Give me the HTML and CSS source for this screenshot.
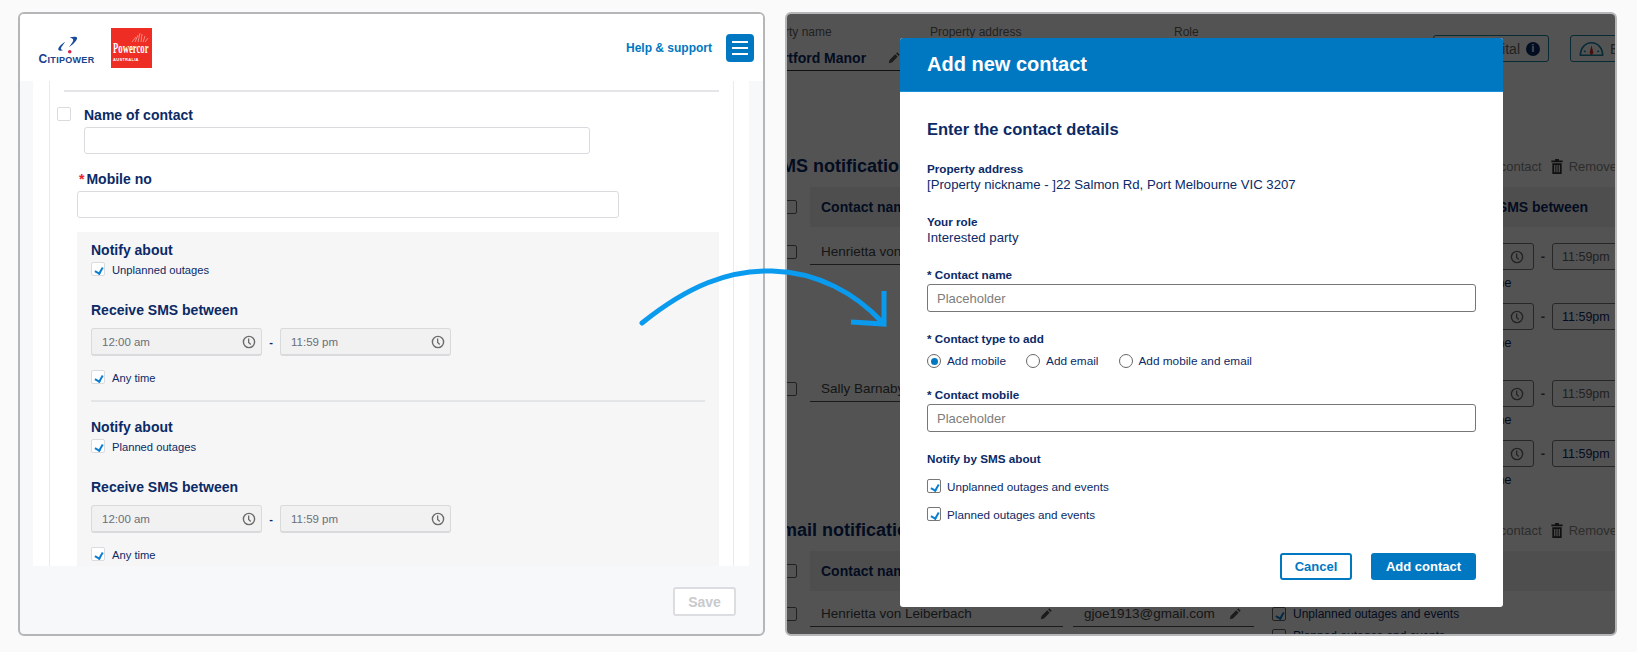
FILE: index.html
```html
<!DOCTYPE html>
<html lang="en">
<head>
    <meta charset="UTF-8">
    <meta name="viewport" content="width=device-width, initial-scale=1.0">
    <title>Add new contact</title>
    <link rel="stylesheet" href="styles.css">
</head>
<body>
    <!-- Iconos reutilizados -->
    <svg class="sprite" aria-hidden="true">
        <symbol id="clock" viewBox="0 0 16 16">
            <circle cx="8" cy="8" r="6.4" fill="none" stroke="currentColor" stroke-width="1.6"/>
            <path d="M7.6 4v4.6l2.4 2.2" fill="none" stroke="currentColor" stroke-width="1.5"/>
        </symbol>
        <symbol id="pencil" viewBox="0 0 16 16">
            <path d="M11.4 1.6l3 3-1.5 1.5-3-3zM8.900 4.100l3 3-7 7-3.900 .9 .9-3.900z" fill="currentColor"/>
        </symbol>
        <symbol id="trash" viewBox="0 0 12 16">
            <path d="M4 0h4v1.500h4v2H0v-2h4zM1 4.500h10V16H1zM3 6.500V14h1.200V6.500zM5.400 6.500V14h1.200V6.500zM7.800 6.500V14H9V6.500z" fill="currentColor" fill-rule="evenodd"/>
        </symbol>
    </svg>

    <main class="board">
        <!-- Pantalla movil: formulario -->
        <section class="frame frame-form">
            <header class="site-header">
                <div class="logos">
                    <div class="logo-citi">
                        <svg class="logo-citi-mark" viewBox="0 0 20 16">
                            <path d="M8 5C4 7.500 1 10.500 2 12.500 3 13.500 5 13 6 12.500 4.500 12.500 3.500 11.500 4.500 10 5.500 8.500 7 6.500 8 5z" fill="#1a4a9c"/>
                            <path d="M12 1c3-.5 6-.8 6.500.5.500 2-3.500 6-7.500 8.500 2.500-3 4.500-5.500 4-7-.5-1-2-1.500-3-2z" fill="#1a4a9c"/>
                            <circle cx="12" cy="14" r="1.600" fill="#d9264a"/>
                        </svg>
                        <span class="logo-citi-name"><span class="logo-citi-cap">C</span>ITIPOWER</span>
                    </div>
                    <div class="logo-powercor">
                        <svg class="logo-powercor-rays" viewBox="0 0 18 9">
                            <path d="M1 9l4-5M4 9l3-7M7 9l2-9M10 9l1-8M12 9l2-6M14 9l3-4" stroke="#f7b7ae" stroke-width=".7"/>
                        </svg>
                        <span class="logo-powercor-name">Powercor</span>
                        <span class="logo-powercor-sub">AUSTRALIA</span>
                    </div>
                </div>
                <div class="header-right">
                    <a class="help-link">Help &amp; support</a>
                    <button class="menu-button" aria-label="Menu"><span></span><span></span><span></span></button>
                </div>
            </header>

            <div class="form-scroll">
                <div class="form-card">
                    <div class="contact-box">
                        <hr class="rule">
                        <div class="name-row">
                            <span class="checkbox checkbox-light"></span>
                            <div>
                                <label class="form-label">Name of contact</label>
                                <input class="text-input input-name" type="text">
                            </div>
                        </div>
                        <div class="mobile-row">
                            <label class="form-label label-required"><span class="star">*</span>Mobile no</label>
                            <input class="text-input input-mobile" type="text">
                        </div>

                        <div class="notify-panel">
                            <h4 class="form-label">Notify about</h4>
                            <div class="check-row"><span class="checkbox checkbox-light is-checked"></span>Unplanned outages</div>
                            <h4 class="form-label receive-title">Receive SMS between</h4>
                            <div class="time-row">
                                <div class="time-input">12:00 am<svg class="clock"><use href="#clock"/></svg></div>
                                <span class="time-dash">-</span>
                                <div class="time-input">11:59 pm<svg class="clock"><use href="#clock"/></svg></div>
                            </div>
                            <div class="check-row any-time"><span class="checkbox checkbox-light is-checked"></span>Any time</div>
                            <hr class="rule rule-panel">
                            <h4 class="form-label">Notify about</h4>
                            <div class="check-row"><span class="checkbox checkbox-light is-checked"></span>Planned outages</div>
                            <h4 class="form-label receive-title">Receive SMS between</h4>
                            <div class="time-row">
                                <div class="time-input">12:00 am<svg class="clock"><use href="#clock"/></svg></div>
                                <span class="time-dash">-</span>
                                <div class="time-input">11:59 pm<svg class="clock"><use href="#clock"/></svg></div>
                            </div>
                            <div class="check-row any-time"><span class="checkbox checkbox-light is-checked"></span>Any time</div>
                        </div>
                    </div>
                </div>
            </div>

            <footer class="form-footer">
                <button class="save-button" disabled>Save</button>
            </footer>
        </section>

        <!-- Escritorio: dialogo sobre la pagina -->
        <section class="frame frame-desktop">
            <div class="page">
                <div class="page-top">
                    <div class="top-field top-field-name">
                        <span class="top-label">Property name</span>
                        <span class="top-value">Hartford Manor<svg class="pencil"><use href="#pencil"/></svg></span>
                    </div>
                    <div class="top-field"><span class="top-label">Property address</span></div>
                    <div class="top-field"><span class="top-label">Role</span></div>
                    <div class="top-actions">
                        <span class="top-button top-button-wide">Go digital<span class="info-dot">i</span></span>
                        <span class="top-button">
                            <svg class="gauge" viewBox="0 0 26 16">
                                <path d="M1.500 14.500C1.500 7 6.500 1.500 13 1.500S24.500 7 24.500 14.500z" fill="none" stroke="#17809f" stroke-width="1.800"/>
                                <path d="M13 4l2 8-2 3-2-3z" fill="#d8301f"/>
                                <path d="M5 10l2 1M21 10l-2 1" stroke="#17809f" stroke-width="1.400"/>
                            </svg>
                            Energy
                        </span>
                    </div>
                </div>

                <div class="section-head">
                    <h3 class="section-title">SMS notifications</h3>
                    <div class="section-actions">
                        <span>Add contact</span>
                        <svg class="trash"><use href="#trash"/></svg>
                        <span>Remove selected</span>
                    </div>
                </div>
                <div class="table-head">
                    <span class="checkbox checkbox-page"></span>
                    <span class="table-band">
                        <span class="head-name">Contact name</span>
                        <span class="head-sms">Receive SMS between</span>
                    </span>
                </div>
                <div class="contact-row">
                    <span class="checkbox checkbox-page"></span>
                    <span class="name-field">Henrietta von Leiberbach</span>
                    <div class="times">
                        <div class="time-line">
                            <div class="page-time is-disabled"><svg class="clock"><use href="#clock"/></svg></div>
                            <span class="page-dash">-</span>
                            <div class="page-time is-disabled">11:59pm</div>
                        </div>
                        <div class="any-line">Any time</div>
                        <div class="time-line">
                            <div class="page-time"><svg class="clock"><use href="#clock"/></svg></div>
                            <span class="page-dash">-</span>
                            <div class="page-time">11:59pm</div>
                        </div>
                        <div class="any-line">Any time</div>
                    </div>
                </div>
                <div class="contact-row contact-row-next">
                    <span class="checkbox checkbox-page"></span>
                    <span class="name-field">Sally Barnaby</span>
                    <div class="times">
                        <div class="time-line">
                            <div class="page-time is-disabled"><svg class="clock"><use href="#clock"/></svg></div>
                            <span class="page-dash">-</span>
                            <div class="page-time is-disabled">11:59pm</div>
                        </div>
                        <div class="any-line">Any time</div>
                        <div class="time-line">
                            <div class="page-time"><svg class="clock"><use href="#clock"/></svg></div>
                            <span class="page-dash">-</span>
                            <div class="page-time">11:59pm</div>
                        </div>
                        <div class="any-line">Any time</div>
                    </div>
                </div>

                <div class="section-head section-head-email">
                    <h3 class="section-title">Email notifications</h3>
                    <div class="section-actions">
                        <span>Add contact</span>
                        <svg class="trash"><use href="#trash"/></svg>
                        <span>Remove selected</span>
                    </div>
                </div>
                <div class="table-head">
                    <span class="checkbox checkbox-page"></span>
                    <span class="table-band"><span class="head-name">Contact name</span></span>
                </div>
                <div class="email-row">
                    <span class="checkbox checkbox-page"></span>
                    <span class="name-field">Henrietta von Leiberbach<svg class="pencil"><use href="#pencil"/></svg></span>
                    <span class="name-field email-field">gjoe1913@gmail.com<svg class="pencil"><use href="#pencil"/></svg></span>
                    <div class="email-checks">
                        <div class="email-check"><span class="checkbox checkbox-page is-checked"></span>Unplanned outages and events</div>
                        <div class="email-check"><span class="checkbox checkbox-page"></span>Planned outages and events</div>
                    </div>
                </div>
            </div>

            <div class="scrim"></div>

            <div class="modal">
                <div class="modal-header">Add new contact</div>
                <div class="modal-body">
                    <h2 class="modal-title">Enter the contact details</h2>

                    <div class="info-block info-address">
                        <div class="modal-label">Property address</div>
                        <div class="modal-text">[Property nickname - ]22 Salmon Rd, Port Melbourne VIC 3207</div>
                    </div>
                    <div class="info-block info-role">
                        <div class="modal-label">Your role</div>
                        <div class="modal-text">Interested party</div>
                    </div>

                    <div class="modal-field field-name">
                        <label class="modal-label">* Contact name</label>
                        <input class="modal-input" type="text" placeholder="Placeholder">
                    </div>

                    <div class="modal-field">
                        <div class="modal-label">* Contact type to add</div>
                        <div class="radio-group">
                            <span class="radio-item"><span class="radio is-selected"></span>Add mobile</span>
                            <span class="radio-item"><span class="radio"></span>Add email</span>
                            <span class="radio-item"><span class="radio"></span>Add mobile and email</span>
                        </div>
                    </div>

                    <div class="modal-field">
                        <label class="modal-label">* Contact mobile</label>
                        <input class="modal-input" type="text" placeholder="Placeholder">
                    </div>

                    <div class="modal-field">
                        <div class="modal-label">Notify by SMS about</div>
                        <div class="modal-check modal-check-first"><span class="checkbox checkbox-modal is-checked"></span>Unplanned outages and events</div>
                        <div class="modal-check"><span class="checkbox checkbox-modal is-checked"></span>Planned outages and events</div>
                    </div>

                    <div class="modal-actions">
                        <button class="btn btn-cancel">Cancel</button>
                        <button class="btn btn-add">Add contact</button>
                    </div>
                </div>
            </div>
        </section>

        <!-- Flecha entre las dos pantallas -->
        <svg class="arrow" viewBox="0 0 1637 652">
            <path d="M642 323C688 286 728 270 772 271C818 272 856 294 882 322" fill="none" stroke="#0a9bef" stroke-width="5" stroke-linecap="round"/>
            <path d="M884 291V324L851 322" fill="none" stroke="#0a9bef" stroke-width="5"/>
        </svg>
    </main>
</body>
</html>
```

FILE: styles.css
```css
* {
  box-sizing: border-box;
}
body {
  margin: 0;
  background-color: #fafafa;
  font-family: "Liberation Sans", Arial, sans-serif;
  color: #0b2a66;
}
.sprite {
  display: none;
}
.board {
  position: relative;
  display: flex;
  gap: 20px;
  width: 1637px;
  height: 652px;
  padding: 12px 20px 0 18px;
}
.arrow {
  position: absolute;
  left: 0;
  top: 0;
  width: 1637px;
  height: 652px;
  pointer-events: none;
}
.frame {
  height: 624px;
  border: 2px solid #b4b6b8;
  border-radius: 6px;
  overflow: hidden;
}
.frame-form {
  width: 747px;
  background-color: #f7f8fa;
}
.frame-desktop {
  position: relative;
  width: 832px;
  background-color: #fff;
}

/* Cabecera del sitio */
.site-header {
  display: flex;
  justify-content: space-between;
  align-items: center;
  height: 67px;
  padding: 0 9px 0 19px;
  background-color: #fff;
}
.logos {
  display: flex;
  align-items: center;
  gap: 17px;
}
.logo-citi {
  display: flex;
  flex-direction: column;
  align-items: center;
  width: 55px;
  margin-top: 6px;
}
.logo-citi-mark {
  width: 23px;
  height: 18px;
  margin-left: 2px;
}
.logo-citi-name {
  font-size: 9px;
  font-weight: bold;
  line-height: 11px;
  letter-spacing: 0.3px;
  color: #17428c;
  white-space: nowrap;
}
.logo-citi-cap {
  font-size: 12px;
}
.logo-powercor {
  display: flex;
  flex-direction: column;
  width: 41px;
  height: 40px;
  padding: 5px 2px 0;
  background-color: #ee2d24;
  color: #fff;
}
.logo-powercor-rays {
  flex: none;
  width: 18px;
  height: 9px;
  margin-left: 18px;
}
.logo-powercor-name {
  font-family: "Liberation Serif", serif;
  font-size: 14px;
  font-weight: bold;
  line-height: 13px;
  white-space: nowrap;
  transform: scaleX(0.62);
  transform-origin: left center;
}
.logo-powercor-sub {
  margin-top: 2px;
  font-size: 4px;
  font-weight: bold;
  line-height: 5px;
  letter-spacing: 0.3px;
}
.header-right {
  display: flex;
  align-items: center;
  gap: 14px;
}
.help-link {
  font-size: 12px;
  font-weight: bold;
  color: #0078c1;
}
.menu-button {
  display: flex;
  flex-direction: column;
  justify-content: center;
  gap: 4px;
  width: 28px;
  height: 28px;
  padding: 0 6px;
  border: 0;
  border-radius: 4px;
  background-color: #0078c1;
}
.menu-button span {
  height: 2px;
  background-color: #fff;
}

/* Formulario */
.form-scroll {
  height: 485px;
  padding: 0 14px 0 13px;
  overflow: hidden;
}
.form-card {
  height: 100%;
  padding: 0 15px 0 16px;
  background-color: #fff;
}
.contact-box {
  height: 100%;
  padding: 9px 14px 0;
  border: solid #e8eaed;
  border-width: 0 1px;
}
.rule {
  height: 2px;
  margin: 0;
  border: 0;
  background-color: #e4e5e6;
}
.name-row {
  display: flex;
  gap: 13px;
  margin: 15px 0 0 -7px;
}
.form-label {
  display: block;
  margin: 0;
  font-size: 14px;
  font-weight: bold;
  line-height: 16px;
}
.text-input {
  display: block;
  height: 27px;
  margin-top: 4px;
  border: 1px solid #d9dbde;
  border-radius: 3px;
  background-color: #fff;
}
.input-name {
  width: 506px;
}
.mobile-row {
  margin: 17px 0 0 13px;
}
.label-required {
  padding-left: 2px;
}
.star {
  margin-right: 2px;
  color: #e8202a;
}
.input-mobile {
  width: 542px;
}
.notify-panel {
  height: 340px;
  margin: 14px 0 0 13px;
  padding: 10px 14px 0;
  background-color: #f6f6f7;
}
.checkbox {
  position: relative;
  display: inline-block;
  flex: none;
  width: 14px;
  height: 14px;
  border: 1px solid #d9dbdf;
  border-radius: 2px;
  background-color: #fff;
}
.checkbox.is-checked::after {
  content: "";
  position: absolute;
  left: 4px;
  top: 3px;
  width: 4px;
  height: 6px;
  border: solid #0a7fd0;
  border-width: 0 2px 2px 0;
  transform: rotate(30deg);
}
.check-row {
  display: flex;
  align-items: flex-start;
  gap: 7px;
  height: 14px;
  margin-top: 4px;
  font-size: 11.200px;
  line-height: 16px;
}
.receive-title {
  margin-top: 26px;
}
.time-row {
  display: flex;
  align-items: center;
  margin-top: 10px;
}
.time-input {
  display: flex;
  justify-content: space-between;
  align-items: center;
  width: 171px;
  height: 28px;
  padding: 0 5px 0 10px;
  border: 1px solid #d9dadc;
  border-bottom-width: 2px;
  border-radius: 3px;
  background-color: #f1f1f2;
  font-size: 11.500px;
  color: #6a6f78;
}
.clock {
  width: 14px;
  height: 14px;
  color: #6b6b6b;
}
.time-dash {
  width: 18px;
  text-align: center;
  font-size: 11px;
  font-weight: bold;
}
.any-time {
  margin-top: 14px;
}
.rule-panel {
  margin: 16px 0 17px;
}
.form-footer {
  display: flex;
  justify-content: flex-end;
  height: 70px;
  padding: 21px 27px 0 0;
}
.save-button {
  width: 63px;
  height: 29px;
  border: 2px solid #dcdde0;
  border-radius: 3px;
  background-color: #fff;
  font-family: inherit;
  font-size: 14px;
  font-weight: bold;
  color: #c9cacd;
}

/* Pagina detras del dialogo */
.page {
  width: 900px;
  margin-left: -27px;
}
.page-top {
  display: grid;
  grid-template-columns: 170px 244px 259px auto;
  height: 58px;
  margin-top: 10px;
}
.top-field {
  display: flex;
  flex-direction: column;
}
.top-label {
  font-size: 12px;
  line-height: 16px;
  color: #666;
}
.top-field-name .top-label {
  margin-left: -7px;
}
.top-value {
  display: flex;
  justify-content: space-between;
  align-items: center;
  width: 145px;
  height: 30px;
  margin-top: 1px;
  padding: 4px 4px 0 5px;
  border-bottom: 1px solid #333;
  font-size: 14px;
  font-weight: bold;
}
.top-actions {
  display: flex;
  gap: 21px;
  margin-top: 11px;
}
.top-button {
  display: flex;
  justify-content: flex-end;
  align-items: center;
  gap: 6px;
  height: 27px;
  padding: 0 8px;
  border: 1px solid #17809f;
  border-radius: 3px;
  font-size: 14px;
  color: #666;
  white-space: nowrap;
}
.top-button-wide {
  width: 116px;
}
.info-dot {
  display: inline-block;
  width: 14px;
  height: 14px;
  border-radius: 50%;
  background-color: #0b2a66;
  color: #fff;
  font-size: 10px;
  font-weight: bold;
  line-height: 14px;
  text-align: center;
}
.gauge {
  width: 25px;
  height: 16px;
}
.pencil {
  width: 13px;
  height: 13px;
  color: #555;
}
.section-head {
  display: flex;
  align-items: center;
  height: 22px;
  margin-top: 73px;
  padding-left: 9px;
}
.section-head-email {
  margin-top: 19px;
}
.section-title {
  flex: none;
  width: 704px;
  margin: 0;
  font-size: 18px;
  font-weight: bold;
  white-space: nowrap;
}
.section-actions {
  display: flex;
  align-items: center;
  gap: 6px;
  font-size: 13px;
  color: #8a8a8a;
  white-space: nowrap;
}
.trash {
  width: 12px;
  height: 15px;
  margin-left: 3px;
  color: #333;
}
.table-head {
  display: flex;
  align-items: center;
  margin-top: 10px;
  padding-left: 23px;
}
.table-band {
  display: flex;
  align-items: center;
  width: 850px;
  height: 40px;
  margin-left: 13px;
  padding-left: 11px;
  background-color: #f0f0f0;
  font-size: 14px;
  font-weight: bold;
  white-space: nowrap;
}
.head-name {
  width: 620px;
}
.checkbox-page {
  border-color: #666;
}
.contact-row {
  display: grid;
  grid-template-columns: 14px 253px auto;
  column-gap: 13px;
  align-items: start;
  margin-top: 16px;
  padding-left: 23px;
}
.contact-row > .checkbox {
  margin-top: 2px;
}
.contact-row-next {
  margin-top: 17px;
}
.name-field {
  display: flex;
  justify-content: space-between;
  align-items: center;
  height: 22px;
  padding: 0 10px 4px 11px;
  border-bottom: 1px solid #555;
  font-size: 13.500px;
  color: #444;
  white-space: nowrap;
}
.times {
  margin-left: 364px;
}
.time-line {
  display: flex;
  align-items: center;
}
.page-time {
  display: flex;
  justify-content: flex-end;
  align-items: center;
  width: 94px;
  height: 27px;
  padding: 0 9px;
  border: 1px solid #777;
  border-radius: 3px;
  font-size: 12.500px;
  color: #0b2a66;
}
.page-time.is-disabled {
  color: #666;
}
.page-time + .page-dash + .page-time {
  justify-content: flex-start;
}
.page-dash {
  width: 18px;
  text-align: center;
  font-size: 13px;
  font-weight: bold;
  color: #555;
}
.any-line {
  height: 33px;
  padding: 5px 0 0 21px;
  font-size: 13px;
  line-height: 16px;
  color: #0b2a66;
}
.email-row {
  display: grid;
  grid-template-columns: 14px 253px 178px auto;
  column-gap: 13px;
  align-items: start;
  margin-top: 14px;
  padding-left: 23px;
}
.email-row > .checkbox {
  margin-top: 2px;
}
.email-field {
  margin-left: -3px;
  padding-right: 12px;
}
.email-check {
  display: flex;
  align-items: center;
  gap: 7px;
  height: 14px;
  margin: 2px 0 8px 5px;
  font-size: 12px;
  color: #0b2a66;
  white-space: nowrap;
}
.scrim {
  position: absolute;
  inset: 0;
  background-color: rgba(0, 0, 0, 0.675);
}

/* Dialogo */
.modal {
  position: absolute;
  left: 113px;
  top: 24px;
  width: 603px;
  height: 569px;
  border-radius: 3px;
  background-color: #fff;
  overflow: hidden;
}
.modal-header {
  display: flex;
  align-items: center;
  height: 54px;
  padding-left: 27px;
  border-bottom: 1px solid #1b8fd6;
  background-color: #0078c1;
  font-size: 20px;
  font-weight: bold;
  color: #fff;
}
.modal-body {
  padding: 27px 27px 0 27px;
}
.modal-title {
  margin: 0;
  font-size: 16.500px;
  font-weight: bold;
  line-height: 20px;
}
.info-block {
  margin-top: 21px;
}
.info-address {
  margin-top: 22px;
}
.modal-label {
  display: block;
  font-size: 11.700px;
  font-weight: bold;
  line-height: 16px;
}
.modal-text {
  font-size: 13.200px;
  line-height: 16px;
}
.modal-field {
  margin-top: 19px;
}
.field-name {
  margin-top: 21px;
}
.modal-input {
  display: block;
  width: 549px;
  height: 28px;
  margin-top: 1px;
  padding: 0 9px;
  border: 1px solid #777;
  border-radius: 3px;
  font-family: inherit;
  font-size: 13px;
}
.modal-input::placeholder {
  color: #7d7d7d;
}
.radio-group {
  display: flex;
  gap: 20px;
  margin-top: 7px;
}
.radio-item {
  display: flex;
  align-items: center;
  gap: 6px;
  font-size: 11.800px;
  line-height: 14px;
}
.radio {
  position: relative;
  width: 14px;
  height: 14px;
  border: 1px solid #666;
  border-radius: 50%;
}
.radio.is-selected::after {
  content: "";
  position: absolute;
  left: 2.500px;
  top: 2.500px;
  width: 7px;
  height: 7px;
  border-radius: 50%;
  background-color: #0078c1;
}
.checkbox-modal {
  border-color: #777;
}
.modal-check {
  display: flex;
  align-items: center;
  gap: 6px;
  height: 14px;
  margin-top: 14px;
  font-size: 11.700px;
}
.modal-check-first {
  margin-top: 12px;
}
.modal-actions {
  display: flex;
  justify-content: flex-end;
  gap: 19px;
  margin-top: 32px;
}
.btn {
  height: 27px;
  border-radius: 3px;
  font-family: inherit;
  font-size: 13px;
  font-weight: bold;
}
.btn-cancel {
  width: 72px;
  border: 2px solid #0078c1;
  background-color: #fff;
  color: #0078c1;
}
.btn-add {
  width: 105px;
  border: 0;
  background-color: #0078c1;
  color: #fff;
}
```
